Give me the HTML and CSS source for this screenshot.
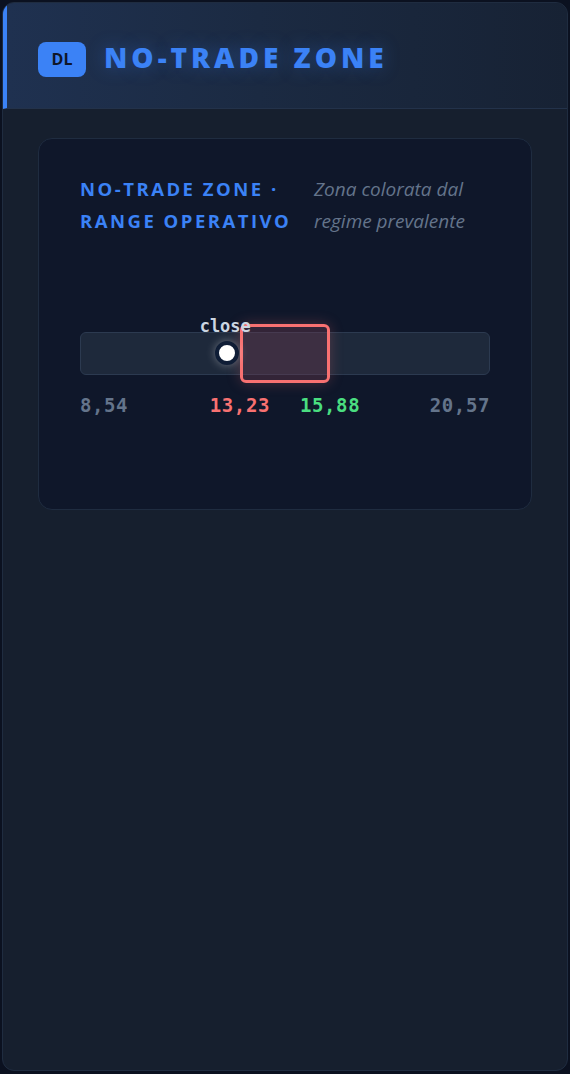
FILE: index.html
```html
<!DOCTYPE html>
<html lang="it">
<head>
    <meta charset="UTF-8">
    <meta name="viewport" content="width=device-width, initial-scale=1.0">
    <title>No-Trade Zone</title>
    <link rel="stylesheet" href="styles.css">
</head>
<body>

<div class="panel">
    <div class="panel-header">
        <span class="badge">DL</span>
        <h1>NO-TRADE ZONE</h1>
    </div>

    <div class="panel-body">
        <div class="card">
            <div class="card-head">
                <div class="card-title">NO-TRADE ZONE · RANGE OPERATIVO</div>
                <div class="card-note">Zona colorata dal regime prevalente</div>
            </div>

            <div class="chart">
                <div class="track">
                    <div class="zone" style="left: 39%; width: 22%;"></div>
                    <div class="close" style="left: 35.7%;">
                        <span class="close-label">close</span>
                        <span class="dot"></span>
                    </div>
                </div>
                <div class="axis">
                    <span class="tick tick-min">8,54</span>
                    <span class="tick tick-low" style="left: 39%;">13,23</span>
                    <span class="tick tick-high" style="left: 61%;">15,88</span>
                    <span class="tick tick-max">20,57</span>
                </div>
            </div>
        </div>
    </div>
</div>

</body>
</html>
```

FILE: styles.css
```css
* {
    box-sizing: border-box;
}
body {
    margin: 0;
    padding: 2px;
    background-color: #0b1120;
    font-family: "Open Sans", "Noto Sans", sans-serif;
}
.panel {
    min-height: 1069px;
    background-color: #161f2e;
    border: 1px solid #1f2c40;
    border-radius: 12px;
    overflow: hidden;
}
.panel-header {
    display: flex;
    align-items: center;
    gap: 18px;
    height: 106px;
    padding-left: 31px;
    padding-top: 7px;
    background: linear-gradient(90deg, #1f3150 0%, #1b2a42 45%, #172234 100%);
    border-left: 4px solid #3b82f6;
    border-bottom: 1px solid #23324a;
}
.badge {
    display: flex;
    align-items: center;
    justify-content: center;
    width: 48px;
    height: 35px;
    border-radius: 8px;
    background-color: #3b82f6;
    color: #0f172a;
    font-size: 16px;
    font-weight: 700;
}
.panel-header h1 {
    margin: 0 0 4px;
    color: #3b82f6;
    font-size: 28px;
    font-weight: 800;
    letter-spacing: 4px;
    text-shadow: 0 0 18px rgba(59, 130, 246, 0.35);
}
.panel-body {
    padding: 29px 35px;
}
.card {
    height: 372px;
    padding: 34px 41px;
    background-color: #0f172a;
    border: 1px solid #1f2c40;
    border-radius: 14px;
}
.card-head {
    display: flex;
    gap: 12px;
}
.card-title {
    flex: 0 0 222px;
    color: #3b82f6;
    font-size: 18.5px;
    font-weight: 700;
    letter-spacing: 2.5px;
    line-height: 32px;
}
.card-note {
    flex: 0 0 175px;
    color: #64748b;
    font-style: italic;
    font-size: 19px;
    line-height: 32px;
}
.chart {
    margin-top: 95px;
}
.track {
    position: relative;
    height: 43px;
    background-color: #1e293b;
    border: 1px solid #2c3a50;
    border-radius: 6px;
}
.zone {
    position: absolute;
    top: -9px;
    bottom: -9px;
    border: 3px solid #f87171;
    border-radius: 6px;
    background-color: rgba(120, 60, 80, 0.35);
    box-shadow: 0 0 14px rgba(248, 113, 113, 0.25);
}
.close {
    position: absolute;
    top: 50%;
}
.dot {
    position: absolute;
    left: -12px;
    top: -13px;
    width: 24px;
    height: 24px;
    border-radius: 50%;
    background-color: #fff;
    border: 4px solid #0f1d36;
    box-shadow: 0 0 10px rgba(255, 255, 255, 0.35);
}
.close-label {
    position: absolute;
    left: -27px;
    top: -38px;
    color: #cbd5e1;
    font-family: "DejaVu Sans Mono", monospace;
    font-size: 17px;
    font-weight: 700;
    line-height: 20px;
}
.axis {
    position: relative;
    height: 40px;
    margin-top: 18px;
    font-family: "DejaVu Sans Mono", monospace;
    font-size: 19px;
    font-weight: 700;
    letter-spacing: 0.6px;
    line-height: 24px;
}
.tick {
    position: absolute;
    top: 0;
}
.tick-min {
    left: 0;
    color: #64748b;
}
.tick-max {
    right: 0;
    color: #64748b;
}
.tick-low {
    transform: translateX(-50%);
    color: #f87171;
}
.tick-high {
    transform: translateX(-50%);
    color: #4ade80;
}
```
